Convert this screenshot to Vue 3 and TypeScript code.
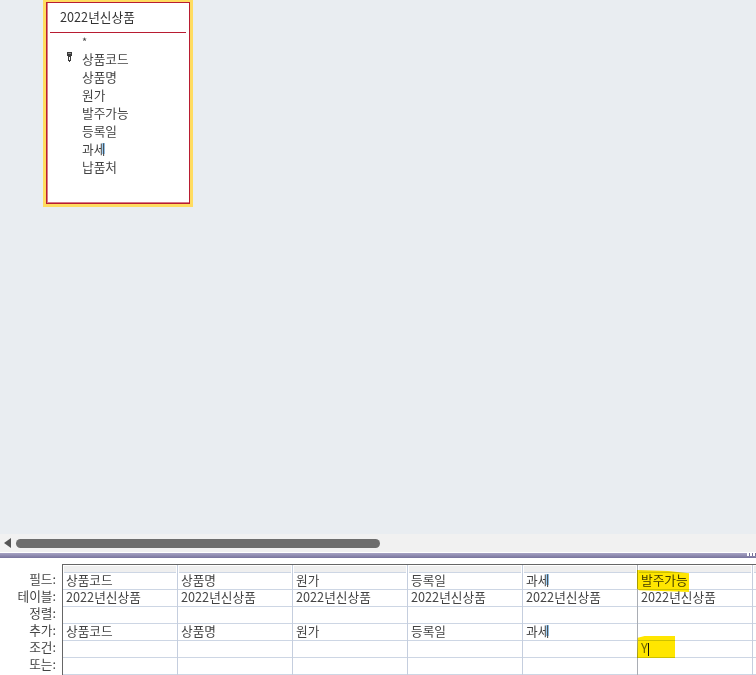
<script setup lang="ts">
const fieldRows = ['필드:', '테이블:', '정렬:', '추가:', '조건:', '또는:']
const table = '2022년신상품'
const fields = ['*', '상품코드', '상품명', '원가', '발주가능', '등록일', '과세', '납품처']
const columns = [
  { field: '상품코드', show: true },
  { field: '상품명', show: true },
  { field: '원가', show: true },
  { field: '등록일', show: true },
  { field: '과세', show: true, tail: true },
  { field: '발주가능', show: false, mark: true },
]
</script>

<template>
  <div class="app">
    <section class="canvas">
      <div class="tablebox">
        <div class="tabletitle">{{ table }}</div>
        <ul class="fieldlist">
          <li v-for="f in fields" :key="f" :class="{ star: f === '*' }">
            <svg v-if="f === '상품코드'" class="key" width="5" height="10" viewBox="0 0 5 10">
              <path d="M0 0h5v4H4v5H3v1H2v-1H1V4H0z" fill="#3a3a3a" />
              <path d="M1 1h3v1H1z" fill="#8a8a8a" />
              <path d="M2 5h1v3H2z" fill="#fff" />
            </svg>
            <span :class="{ tail: f === '과세' }">{{ f }}</span>
          </li>
        </ul>
      </div>
    </section>

    <div class="hscroll">
      <span class="arrow"></span>
      <span class="thumb"></span>
    </div>

    <div class="splitter"><span class="dots"></span></div>

    <section class="qbe">
      <div class="labels">
        <div class="labelhead"></div>
        <div v-for="l in fieldRows" :key="l" class="label">{{ l }}</div>
      </div>
      <div class="cols">
        <div v-for="(c, i) in columns" :key="i" class="col" :class="{ active: c.mark }">
          <div class="selector"></div>
          <div class="cell">
            <span class="txt" :class="{ tail: c.tail }">{{ c.field }}</span>
            <span v-if="c.mark" class="mark markfield"></span>
          </div>
          <div class="cell"><span class="txt">{{ table }}</span></div>
          <div class="cell"></div>
          <div class="cell"><span v-if="c.show" class="txt" :class="{ tail: c.tail }">{{ c.field }}</span></div>
          <div class="cell">
            <template v-if="c.mark">
              <span class="txt crit">Y</span>
              <span class="mark markcrit"></span>
              <i class="caret"></i>
            </template>
          </div>
          <div class="cell"></div>
        </div>
        <div class="col rest">
          <div class="selector"></div>
          <div v-for="n in 6" :key="n" class="cell"></div>
        </div>
      </div>
    </section>
  </div>
</template>

<style>
html, body { margin: 0; background: #fff; overflow: hidden; }
</style>

<style scoped>
.app {
  width: 756px;
  height: 675px;
  overflow: hidden;
  font-family: "Noto Sans CJK KR", "Noto Sans", sans-serif;
  font-size: 12.7px;
  color: #444;
  background: #fff;
}
.canvas {
  height: 534px;
  background: #e9edf1;
  position: relative;
}
.tablebox {
  position: absolute;
  left: 46px;
  top: 2px;
  width: 142px;
  height: 200px;
  border: 1px solid #b81c32;
  outline: 3px solid #ffdc60;
  background: #fff;
  box-shadow: inset 1px 0 0 #d87a88, inset 0 -1px 0 #d87a88;
}
.tabletitle {
  margin: 0 3px;
  height: 29px;
  line-height: 27px;
  padding-left: 10px;
  border-bottom: 1px solid #b81c32;
  color: #333;
}
.fieldlist {
  list-style: none;
  margin: 0;
  padding: 0 0 0 35px;
}
.fieldlist li {
  height: 18px;
  line-height: 17px;
  position: relative;
}
.fieldlist li.star { height: 17px; line-height: 17px; font-size: 11px; }
.key { position: absolute; left: -15px; top: 2px; }
.tail {
  background: linear-gradient(#9ccff7, #9ccff7) right center / 3px 11px no-repeat;
}
.hscroll {
  height: 18px;
  background: #f1f1f1;
  display: flex;
  align-items: center;
  padding-left: 4px;
  gap: 5px;
}
.arrow {
  width: 0;
  height: 0;
  border-top: 5px solid transparent;
  border-bottom: 5px solid transparent;
  border-right: 7px solid #555;
}
.thumb {
  width: 364px;
  height: 9px;
  border-radius: 5px;
  background: #6d6d6d;
}
.splitter {
  margin-top: 1px;
  height: 5px;
  background: linear-gradient(#a7a3c4, #77739c);
  position: relative;
}
.dots {
  position: absolute;
  right: 0;
  top: 0;
  width: 9px;
  height: 3px;
  background: repeating-linear-gradient(90deg, #fff 0 2px, #77739c 2px 3px);
}
.qbe {
  margin-top: 6px;
  display: flex;
  height: 111px;
}
.labels { width: 62px; flex: none; }
.labelhead { height: 6px; }
.label {
  height: 17px;
  line-height: 17px;
  text-align: right;
  padding-right: 6px;
  box-sizing: border-box;
}
.cols {
  display: flex;
  flex: 1;
  border-left: 1px solid #666;
  border-top: 1px solid #666;
  height: 110px;
}
.col {
  width: 114px;
  flex: none;
  border-right: 1px solid #c5cede;
}
.col:nth-child(5) { border-right-color: #a9adb4; }
.col.rest { flex: 1; border-right: 0; }
.selector {
  height: 6px;
  background: #efefef;
  border-top: 1px solid #fff;
  border-bottom: 1px solid #cdd6e4;
  margin: 0 1px;
  box-sizing: content-box;
}
.cell {
  height: 16px;
  line-height: 13px;
  border-bottom: 1px solid #cdd6e4;
  padding-left: 3px;
  position: relative;
}
.txt { position: relative; display: inline-block; }
.mark {
  position: absolute;
  background: #ffe600;
  mix-blend-mode: multiply;
}
.markfield {
  left: -1px;
  top: -3px;
  width: 52px;
  height: 23px;
  clip-path: polygon(0 0, 60% 4%, 100% 14%, 100% 96%, 4% 88%, 0 80%);
}
.markcrit {
  left: -1px;
  top: -5px;
  width: 38px;
  height: 22px;
  clip-path: polygon(2% 8%, 20% 0, 100% 0, 100% 100%, 0 100%);
}
.crit { color: #6f6f6f; }
.caret {
  position: absolute;
  left: 10px;
  top: 2px;
  width: 1px;
  height: 13px;
  background: #111;
}
</style>
